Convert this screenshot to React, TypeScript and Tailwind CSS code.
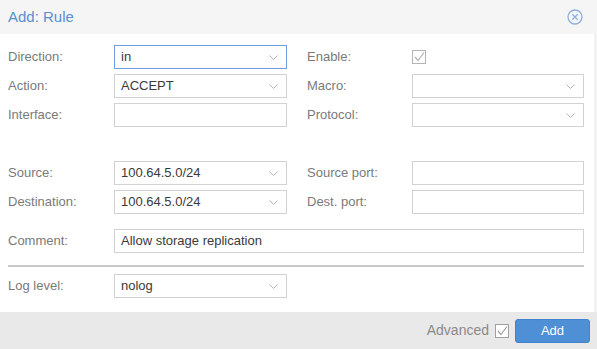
const font = { fontFamily: '"Liberation Sans", Arial, sans-serif' };

function Chevron() {
  return (
    <svg width="9" height="5" viewBox="0 0 9 5" className="shrink-0">
      <path d="M0.5 0.5 L4.5 4.5 L8.5 0.5" fill="none" stroke="#b8b8b8" strokeWidth="1" />
    </svg>
  );
}

function CheckBox({ color = "#a8a8a8" }: { color?: string }) {
  return (
    <svg width="14" height="14" viewBox="0 0 14 14" className="shrink-0">
      <rect x="0.5" y="0.5" width="13" height="13" fill="white" stroke={color} strokeWidth="1" />
      <path d="M3 7 L6 10.5 L12 2.5" fill="none" stroke={color} strokeWidth="1.2" />
    </svg>
  );
}

function Field({
  value = "",
  combo = false,
  focus = false,
  width = "w-[173px]",
}: {
  value?: string;
  combo?: boolean;
  focus?: boolean;
  width?: string;
}) {
  return (
    <div
      className={`${width} h-6 flex items-center justify-between px-[6px] pr-[8px] bg-white border text-[13px] text-[#3a3a3a] ${
        focus ? "border-[#6e9fdc]" : "border-[#d2d2d2]"
      }`}
    >
      <span>{value}</span>
      {combo && <Chevron />}
    </div>
  );
}

function Label({ text, width = "w-[106px]" }: { text: string; width?: string }) {
  return <div className={`${width} shrink-0 text-[13px] text-[#7a7a7a]`}>{text}</div>;
}

export default function App() {
  return (
    <div className="w-[597px] h-[349px] flex flex-col bg-white overflow-hidden" style={font}>
      <div className="h-[34px] shrink-0 bg-[#f5f5f5] flex items-center justify-between pl-2 pr-[14px]">
        <span className="text-[15px] text-[#5a8fd0]">Add: Rule</span>
        <svg width="16" height="16" viewBox="0 0 16 16">
          <circle cx="8" cy="8" r="7" fill="none" stroke="#8db0e0" strokeWidth="1.3" />
          <path d="M5.3 5.3 L10.7 10.7 M10.7 5.3 L5.3 10.7" stroke="#8db0e0" strokeWidth="1.3" />
        </svg>
      </div>

      <div className="flex-1 flex flex-col pl-2 pt-[11px] border-r-[3px] border-r-[#f2f2f2]">
        <div className="flex items-center h-6">
          <Label text="Direction:" />
          <Field value="in" combo focus />
          <div className="w-5" />
          <Label text="Enable:" width="w-[105px]" />
          <CheckBox color="#b4b4b4" />
        </div>
        <div className="flex items-center h-6 mt-[5px]">
          <Label text="Action:" />
          <Field value="ACCEPT" combo />
          <div className="w-5" />
          <Label text="Macro:" width="w-[105px]" />
          <Field combo width="w-[172px]" />
        </div>
        <div className="flex items-center h-6 mt-[5px]">
          <Label text="Interface:" />
          <Field />
          <div className="w-5" />
          <Label text="Protocol:" width="w-[105px]" />
          <Field combo width="w-[172px]" />
        </div>
        <div className="flex items-center h-6 mt-[34px]">
          <Label text="Source:" />
          <Field value="100.64.5.0/24" combo />
          <div className="w-5" />
          <Label text="Source port:" width="w-[105px]" />
          <Field width="w-[172px]" />
        </div>
        <div className="flex items-center h-6 mt-[5px]">
          <Label text="Destination:" />
          <Field value="100.64.5.0/24" combo />
          <div className="w-5" />
          <Label text="Dest. port:" width="w-[105px]" />
          <Field width="w-[172px]" />
        </div>
        <div className="flex items-center h-6 mt-[15px]">
          <Label text="Comment:" />
          <Field value="Allow storage replication" width="w-[470px]" />
        </div>
        <div className="h-[2px] w-[576px] bg-[#c9c9c9] mt-[12px]" />
        <div className="flex items-center h-6 mt-[7px]">
          <Label text="Log level:" />
          <Field value="nolog" combo />
        </div>
      </div>

      <div className="h-[37px] shrink-0 bg-[#e9e9e9] flex items-center justify-end pr-[7px]">
        <span className="text-[14px] text-[#8a8a8a] mr-[6px]">Advanced</span>
        <CheckBox color="#a0a0a0" />
        <button className="ml-[6px] w-[75px] h-6 rounded-[3px] bg-[#4f8fd5] border border-[#4383cc] text-white text-[13px]">
          Add
        </button>
      </div>
    </div>
  );
}
